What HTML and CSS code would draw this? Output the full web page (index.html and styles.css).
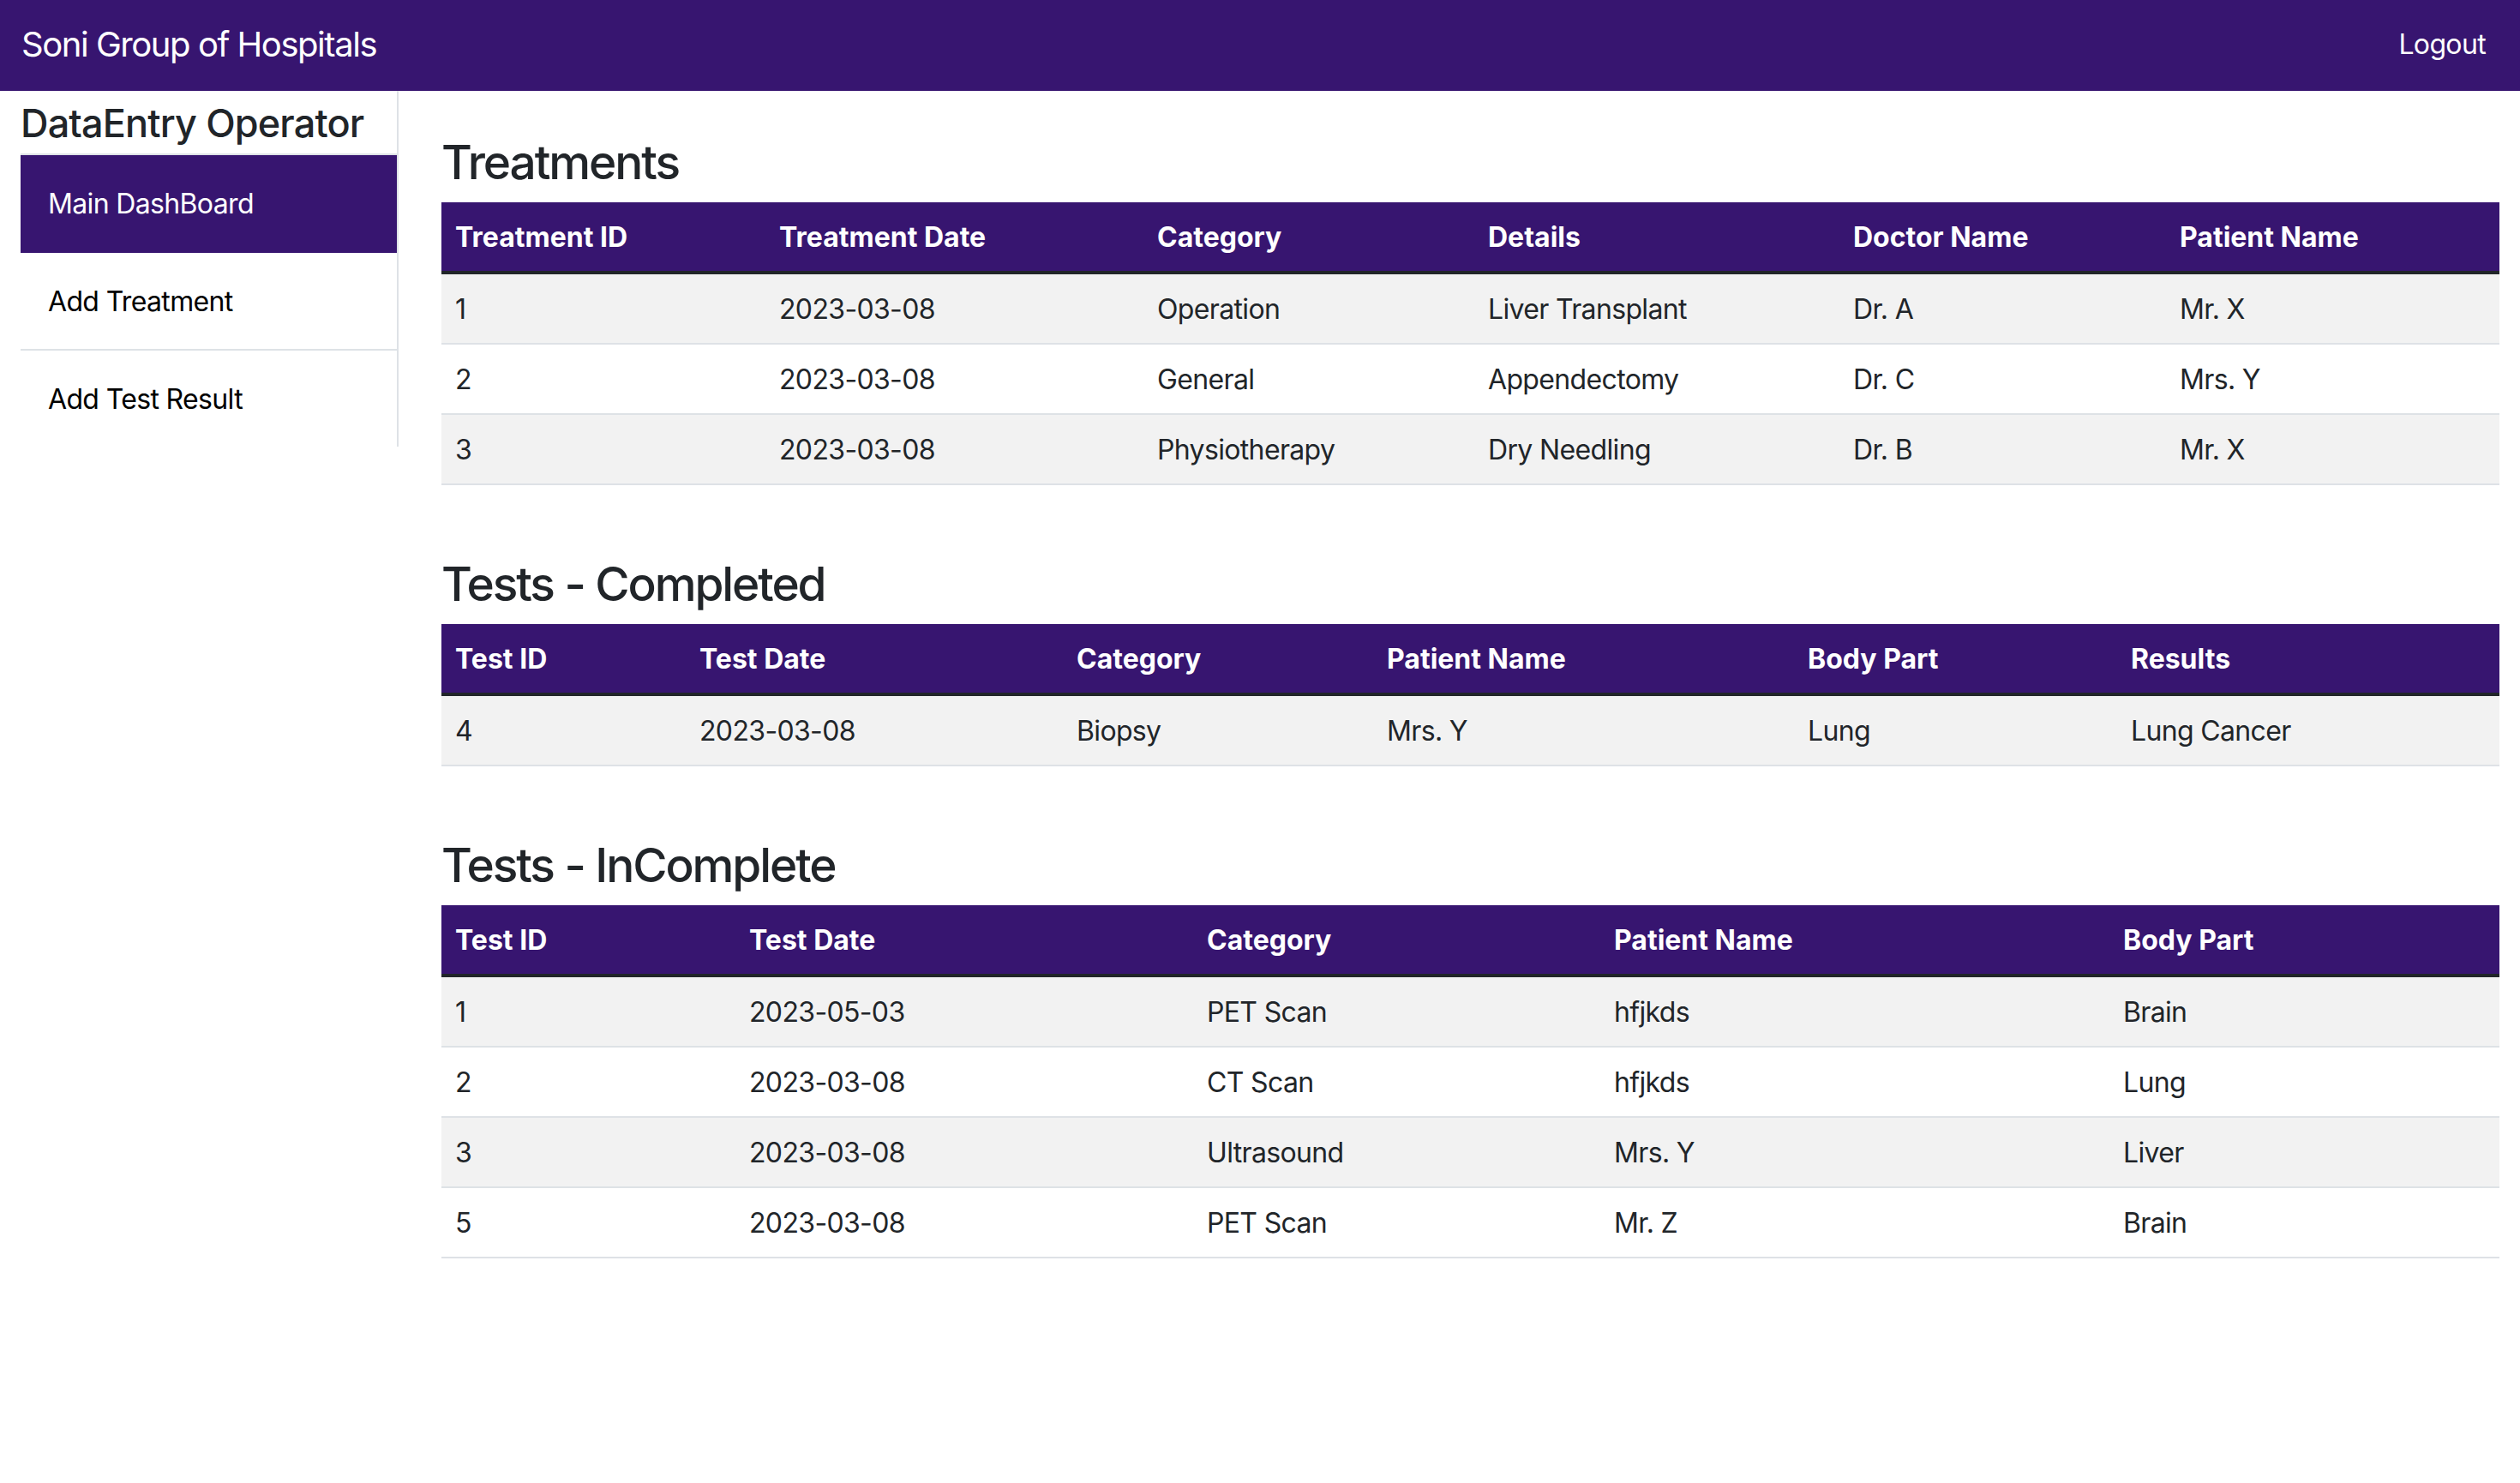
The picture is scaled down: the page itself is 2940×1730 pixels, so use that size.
FILE: index.html
```html
<!DOCTYPE html>
<html lang="en">
<head>
<meta charset="utf-8">
<title>Soni Group of Hospitals - DataEntry Operator</title>
<link rel="stylesheet" href="styles.css">
</head>
<body>
<nav class="topbar">
  <a class="brand" href="#">Soni Group of Hospitals</a>
  <a class="logout" href="#">Logout</a>
</nav>
<div class="layout">
  <aside class="sidebar">
    <h4 class="side-title">DataEntry Operator</h4>
    <div class="menu">
      <a class="menu-item active" href="#">Main DashBoard</a>
      <a class="menu-item" href="#">Add Treatment</a>
      <a class="menu-item last" href="#">Add Test Result</a>
    </div>
  </aside>
  <main class="content">
    <section class="block">
      <h3>Treatments</h3>
      <table class="data t-treat">
        <thead>
          <tr><th>Treatment ID</th><th>Treatment Date</th><th>Category</th><th>Details</th><th>Doctor Name</th><th>Patient Name</th></tr>
        </thead>
        <tbody>
          <tr><td>1</td><td>2023-03-08</td><td>Operation</td><td>Liver Transplant</td><td>Dr. A</td><td>Mr. X</td></tr>
          <tr><td>2</td><td>2023-03-08</td><td>General</td><td>Appendectomy</td><td>Dr. C</td><td>Mrs. Y</td></tr>
          <tr><td>3</td><td>2023-03-08</td><td>Physiotherapy</td><td>Dry Needling</td><td>Dr. B</td><td>Mr. X</td></tr>
        </tbody>
      </table>
    </section>
    <section class="block">
      <h3>Tests - Completed</h3>
      <table class="data t-done">
        <thead>
          <tr><th>Test ID</th><th>Test Date</th><th>Category</th><th>Patient Name</th><th>Body Part</th><th>Results</th></tr>
        </thead>
        <tbody>
          <tr><td>4</td><td>2023-03-08</td><td>Biopsy</td><td>Mrs. Y</td><td>Lung</td><td>Lung Cancer</td></tr>
        </tbody>
      </table>
    </section>
    <section class="block">
      <h3>Tests - InComplete</h3>
      <table class="data t-todo">
        <thead>
          <tr><th>Test ID</th><th>Test Date</th><th>Category</th><th>Patient Name</th><th>Body Part</th></tr>
        </thead>
        <tbody>
          <tr><td>1</td><td>2023-05-03</td><td>PET Scan</td><td>hfjkds</td><td>Brain</td></tr>
          <tr><td>2</td><td>2023-03-08</td><td>CT Scan</td><td>hfjkds</td><td>Lung</td></tr>
          <tr><td>3</td><td>2023-03-08</td><td>Ultrasound</td><td>Mrs. Y</td><td>Liver</td></tr>
          <tr><td>5</td><td>2023-03-08</td><td>PET Scan</td><td>Mr. Z</td><td>Brain</td></tr>
        </tbody>
      </table>
    </section>
  </main>
</div>
</body>
</html>
```
FILE: styles.css
```css
* { box-sizing: border-box; }

body {
  margin: 0;
  font-family: Inter, "Liberation Sans", "DejaVu Sans", sans-serif;
  font-size: 32px;
  line-height: 1.5;
  letter-spacing: -0.65px;
  color: #212529;
  background: #fff;
}

a { text-decoration: none; }

.topbar {
  height: 106px;
  background: #371570;
  display: flex;
  align-items: center;
  justify-content: space-between;
  padding: 0 24px 3px;
}

.brand {
  font-size: 40px;
  line-height: 60px;
  letter-spacing: -1.45px;
  color: #fff;
  padding-left: 1px;
}

.logout {
  font-size: 32px;
  line-height: 48px;
  color: #fff;
  padding: 0 16px;
}

.layout {
  display: flex;
  align-items: flex-start;
  padding: 0 24px;
}

.sidebar {
  flex: none;
  width: 441px;
  border-right: 2px solid #dee2e6;
}

.side-title {
  margin: 11px 0 8px;
  font-size: 45px;
  font-weight: 500;
  line-height: 1.2;
  letter-spacing: -0.85px;
  color: #212529;
}

.menu {
  display: flex;
  flex-direction: column;
}

.menu-item {
  display: block;
  padding: 33px 32px 31px;
  line-height: 48px;
  color: #000;
  border-bottom: 2px solid #dee2e6;
}

.menu-item:first-child { border-top: 2px solid #dee2e6; }
.menu-item.last { border-bottom: none; }

.menu-item.active {
  background: #371570;
  color: #fff;
  border-bottom-color: #371570;
}

.content {
  flex: 1;
  min-width: 0;
  padding-left: 50px;
}

.block { padding-top: 47px; }

.block h3 {
  margin: 0 0 13px;
  padding-top: 3px;
  font-size: 55px;
  font-weight: 500;
  line-height: 67px;
  letter-spacing: -2.1px;
  color: #212529;
}

.data {
  width: 100%;
  border-collapse: collapse;
  table-layout: fixed;
  margin-bottom: 32px;
}

.data th,
.data td {
  padding: 17px 16px 15px;
  text-align: left;
  line-height: 48px;
  white-space: nowrap;
}

.data th {
  background: #371570;
  color: #fff;
  font-weight: 700;
  letter-spacing: 0;
  border-bottom: 4px solid #212529;
}

.data td {
  border-bottom: 2px solid #dee2e6;
}

.data tbody tr:nth-child(odd) td { background: #f2f2f2; }

.t-treat th:nth-child(1) { width: 378px; }
.t-treat th:nth-child(2) { width: 441px; }
.t-treat th:nth-child(3) { width: 386px; }
.t-treat th:nth-child(4) { width: 426px; }
.t-treat th:nth-child(5) { width: 381px; }
.t-treat th:nth-child(6) { width: 389px; }

.t-done th:nth-child(1) { width: 285px; }
.t-done th:nth-child(2) { width: 440px; }
.t-done th:nth-child(3) { width: 362px; }
.t-done th:nth-child(4) { width: 491px; }
.t-done th:nth-child(5) { width: 377px; }
.t-done th:nth-child(6) { width: 446px; }

.t-todo th:nth-child(1) { width: 343px; }
.t-todo th:nth-child(2) { width: 534px; }
.t-todo th:nth-child(3) { width: 475px; }
.t-todo th:nth-child(4) { width: 594px; }
.t-todo th:nth-child(5) { width: 455px; }
```
